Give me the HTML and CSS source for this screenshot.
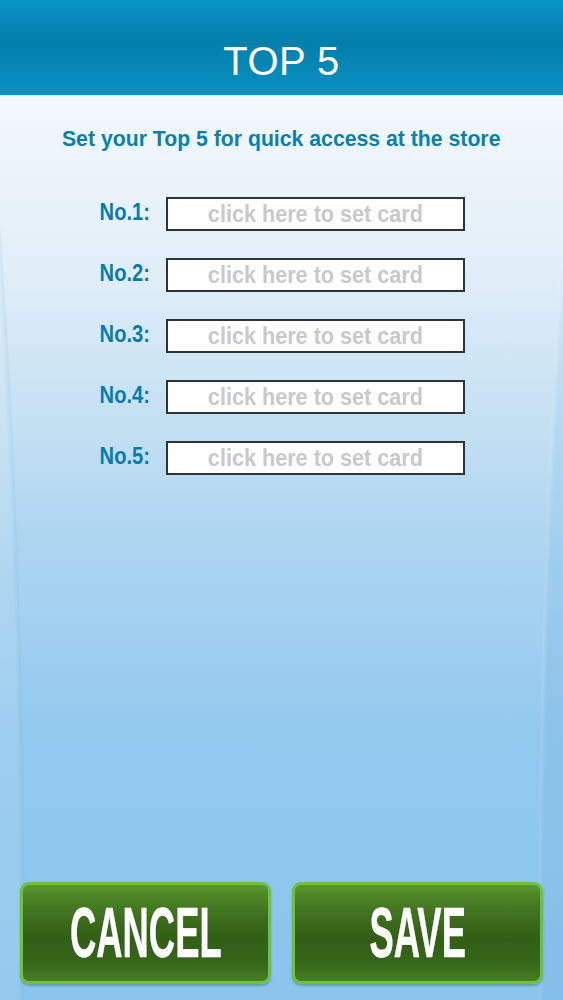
FILE: index.html
```html
<!DOCTYPE html>
<html>
<head>
<meta charset="utf-8">
<title>Top 5</title>
<link rel="stylesheet" href="styles.css">
</head>
<body>
<div class="screen">
  <header class="topbar">
    <h1 class="title">TOP 5</h1>
  </header>
  <main class="content">
    <p class="subtitle"><span class="squeeze">Set your Top 5 for quick access at the store</span></p>
    <ul class="slots">
      <li class="slot"><span class="label"><span class="squeeze">No.1:</span></span><button class="field"><span class="squeeze">click here to set card</span></button></li>
      <li class="slot"><span class="label"><span class="squeeze">No.2:</span></span><button class="field"><span class="squeeze">click here to set card</span></button></li>
      <li class="slot"><span class="label"><span class="squeeze">No.3:</span></span><button class="field"><span class="squeeze">click here to set card</span></button></li>
      <li class="slot"><span class="label"><span class="squeeze">No.4:</span></span><button class="field"><span class="squeeze">click here to set card</span></button></li>
      <li class="slot"><span class="label"><span class="squeeze">No.5:</span></span><button class="field"><span class="squeeze">click here to set card</span></button></li>
    </ul>
    <div class="actions">
      <button class="btn"><span class="btn-text">CANCEL</span></button>
      <button class="btn"><span class="btn-text">SAVE</span></button>
    </div>
  </main>
</div>
</body>
</html>
```
FILE: styles.css
```css
html, body {
  margin: 0;
  padding: 0;
}
body {
  width: 563px;
  height: 1000px;
  overflow: hidden;
  font-family: "Liberation Sans", Arial, sans-serif;
}
.screen {
  display: flex;
  flex-direction: column;
  height: 1000px;
}
.topbar {
  height: 95px;
  box-sizing: border-box;
  flex: none;
  display: flex;
  align-items: flex-start;
  justify-content: center;
  padding-top: 41px;
  background: linear-gradient(to bottom, #0b96c8 0%, #0686b5 25%, #027fab 45%, #0788b7 75%, #0b92c3 100%);
}
.title {
  margin: 0;
  color: #ffffff;
  font-weight: normal;
  font-size: 40px;
  line-height: 40px;
  letter-spacing: 0.5px;
}
.content {
  flex: 1;
  display: flex;
  flex-direction: column;
  align-items: center;
  background:
    radial-gradient(ellipse 200px 1500px at -175px 850px, rgba(255,255,255,0.14) 0, rgba(255,255,255,0.09) 97%, rgba(120,165,200,0.14) 99.5%, rgba(255,255,255,0) 100%),
    radial-gradient(ellipse 200px 1500px at 738px 850px, rgba(50,120,180,0.08) 0, rgba(50,120,180,0.08) 97%, rgba(255,255,255,0.09) 99.5%, rgba(255,255,255,0) 100%),
    linear-gradient(to bottom, #f3f8fc 0%, #e3eff8 18%, #c6e1f3 35%, #a9d3f0 52%, #94c9ee 70%, #8ac4ec 100%);
}
.squeeze {
  display: inline-block;
  white-space: nowrap;
}
.subtitle {
  margin: 30px 0 0;
  color: #0a80af;
  font-weight: bold;
  font-size: 22px;
  line-height: 28px;
  white-space: nowrap;
  text-align: center;
}
.subtitle .squeeze {
  transform: scaleX(0.965);
}
.slots {
  list-style: none;
  margin: 44px 0 0;
  padding: 0 8px 0 0;
  display: flex;
  flex-direction: column;
  gap: 27px;
}
.slot {
  display: flex;
  align-items: center;
  gap: 16px;
}
.label {
  width: 60px;
  color: #0a7cab;
  font-weight: bold;
  font-size: 24px;
  line-height: 26px;
  text-align: right;
  margin-top: -5px;
}
.label .squeeze {
  transform: scaleX(0.84);
  transform-origin: right center;
}
.field {
  width: 299px;
  height: 34px;
  box-sizing: border-box;
  border: 2px solid #2e3338;
  background: #ffffff;
  color: #c9c9c9;
  font-family: "Liberation Sans", Arial, sans-serif;
  font-weight: bold;
  font-size: 23px;
  line-height: 26px;
  padding: 0;
  text-align: center;
  overflow: hidden;
}
.field .squeeze {
  transform: scaleX(0.94);
}
.actions {
  margin-top: auto;
  margin-bottom: 16px;
  display: flex;
  gap: 21px;
}
.btn {
  width: 251px;
  height: 102px;
  box-sizing: border-box;
  border: 3px solid #6cc23b;
  border-radius: 9px;
  background: linear-gradient(to bottom, #5a972e 0%, #4a8226 14%, #3c6c1c 36%, #325e16 56%, #36661a 80%, #457e24 100%);
  box-shadow: 0 2px 2px rgba(40,90,40,0.35);
  color: #ffffff;
  font-family: "Liberation Sans", Arial, sans-serif;
  padding: 0;
  display: flex;
  align-items: center;
  justify-content: center;
}
.btn-text {
  display: inline-block;
  font-weight: bold;
  font-size: 70px;
  line-height: 70px;
  transform: scaleX(0.52);
  -webkit-text-stroke: 0.5px #ffffff;
  white-space: nowrap;
}
```
